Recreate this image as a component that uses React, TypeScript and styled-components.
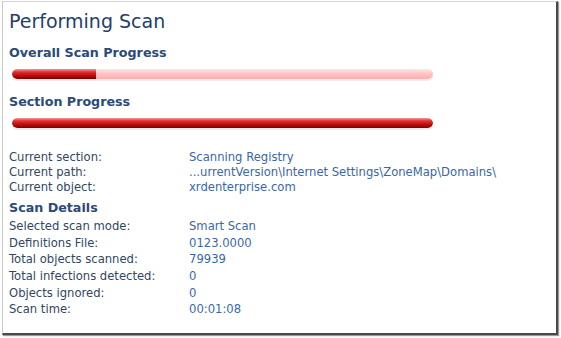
import * as React from 'react'
import styled, { createGlobalStyle } from 'styled-components'

const GlobalStyle = createGlobalStyle`
  html, body {
    margin: 0;
    padding: 0;
    background: #ffffff;
  }
  body {
    font-family: 'DejaVu Sans', Verdana, sans-serif;
  }
`

const Page = styled.div`
  width: 561px;
  height: 338px;
  padding: 1px 0 0 2px;
  box-sizing: border-box;
  background: #ffffff;
`

const Frame = styled.div`
  width: 556px;
  height: 334px;
  box-sizing: border-box;
  border-left: 1px solid #c9c9c9;
  border-top: 1px solid #d4d4d4;
  border-right: 2px solid #4a4a4a;
  border-bottom: 2px solid #4a4a4a;
  box-shadow: 1px 1px 1px #9a9a9a;
  padding: 7px 0 0 6px;
  overflow: hidden;
`

const Title = styled.h1`
  margin: 0;
  font-size: 19px;
  line-height: 24px;
  font-weight: normal;
  color: #23406b;
`

const Heading = styled.h2<{ $top: number }>`
  margin: ${({ $top }) => $top}px 0 0;
  font-size: 12.7px;
  line-height: 16px;
  font-weight: bold;
  color: #2b4a78;
`

const Track = styled.div<{ $top: number }>`
  margin: ${({ $top }) => $top}px 0 0 3px;
  width: 421px;
  height: 10px;
  border-radius: 5px;
  background: linear-gradient(#ffe8e8 0%, #ffc4c4 45%, #f9b0b0 100%);
  box-shadow: 0 2px 0 #ededed;
  overflow: hidden;
`

const Fill = styled.div`
  height: 100%;
  border-radius: 5px 0 0 5px;
  background: linear-gradient(#f29a9a 0%, #e03030 30%, #c41010 60%, #7e0000 100%);
`

const FullFill = styled(Fill)`
  border-radius: 5px;
`

const Rows = styled.div<{ $top: number; $gap: number }>`
  margin-top: ${({ $top }) => $top}px;
  display: grid;
  grid-template-columns: 180px 1fr;
  grid-auto-rows: ${({ $gap }) => $gap}px;
  align-items: center;
  font-size: 11.6px;
`

const Label = styled.div`
  color: #33465e;
  white-space: nowrap;
`

const Value = styled.div`
  color: #3a67a4;
  white-space: nowrap;
`

const current: [string, string][] = [
  ['Current section:', 'Scanning Registry'],
  ['Current path:', '...urrentVersion\\Internet Settings\\ZoneMap\\Domains\\'],
  ['Current object:', 'xrdenterprise.com'],
]

const details: [string, string][] = [
  ['Selected scan mode:', 'Smart Scan'],
  ['Definitions File:', '0123.0000'],
  ['Total objects scanned:', '79939'],
  ['Total infections detected:', '0'],
  ['Objects ignored:', '0'],
  ['Scan time:', '00:01:08'],
]

const InfoRows = ({ rows, top, gap }: { rows: [string, string][]; top: number; gap: number }) => (
  <Rows $top={top} $gap={gap}>
    {rows.map(([label, value]) => (
      <React.Fragment key={label}>
        <Label>{label}</Label>
        <Value>{value}</Value>
      </React.Fragment>
    ))}
  </Rows>
)

const App = () => {
  const overall = 20
  return (
    <>
      <GlobalStyle />
      <Page>
        <Frame>
          <Title>Performing Scan</Title>
          <Heading $top={12}>Overall Scan Progress</Heading>
          <Track $top={8}>
            <Fill style={{ width: `${overall}%` }} />
          </Track>
          <Heading $top={15}>Section Progress</Heading>
          <Track $top={8}>
            <FullFill />
          </Track>
          <InfoRows rows={current} top={21} gap={15} />
          <Heading $top={6}>Scan Details</Heading>
          <InfoRows rows={details} top={2} gap={16.6} />
        </Frame>
      </Page>
    </>
  )
}

export default App
